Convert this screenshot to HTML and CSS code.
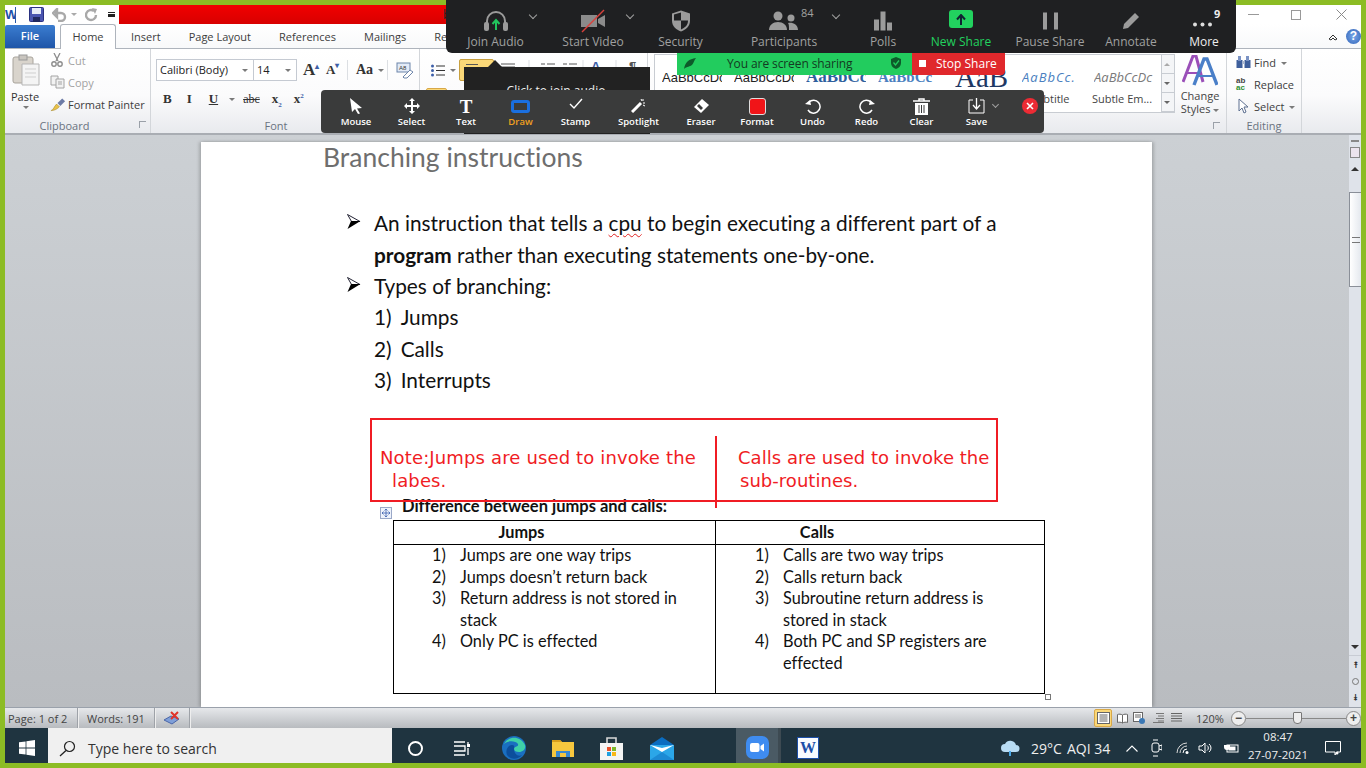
FILE: index.html
```html
<!DOCTYPE html>
<html>
	<head>
		<meta charset="UTF-8">
		<title>Branching instructions - Word</title>
		<link rel="stylesheet" href="styles.css">
	</head>
	<body>
		<div class="screen">
			<div class="titlebar">
				<div class="qat">
					<span class="word-mini">W</span>
					<svg class="qat-save" width="15" height="15" viewBox="0 0 15 15"><rect x="0.5" y="0.5" width="14" height="14" rx="1" fill="#4a55b0" stroke="#2a3180"/><rect x="3" y="1" width="9" height="6" fill="#e8ecf8"/><rect x="4" y="10" width="7" height="5" fill="#20285f"/></svg>
					<svg class="qat-undo" width="16" height="14" viewBox="0 0 16 14"><path d="M3 5h6a4 4 0 0 1 0 8H6M1 5l4-4v8z" fill="none" stroke="#a9a9a9" stroke-width="2.4"/></svg>
					<span class="qat-arrow"></span>
					<svg class="qat-redo" width="13" height="14" viewBox="0 0 13 14"><path d="M9 3A5 5 0 1 0 11 7" fill="none" stroke="#a9a9a9" stroke-width="2.4"/><path d="M7 0l5 1-2 5z" fill="#a9a9a9"/></svg>
					<span class="qat-custom"></span>
				</div>
				<div class="title-band"><span class="title-text">b</span></div>
				<div class="win-controls">
					<span class="win-min"></span>
					<span class="win-restore"></span>
					<svg width="11" height="11" viewBox="0 0 11 11"><path d="M0.5 0.5l10 10M10.5 0.5l-10 10" stroke="#8a8a8a"/></svg>
				</div>
			</div>

			<div class="tabs">
				<span class="tab-file">File</span>
				<span class="tab tab-active">Home</span>
				<span class="tab tab-insert">Insert</span>
				<span class="tab tab-layout">Page Layout</span>
				<span class="tab tab-refs">References</span>
				<span class="tab tab-mail">Mailings</span>
				<span class="tab tab-review">Review</span>
				<span class="tab-help-wrap">
					<svg width="10" height="8" viewBox="0 0 10 8"><path d="M1 6l4-4 4 4-2 1-2-2-2 2z" fill="none" stroke="#333"/></svg>
					<span class="tab-help">?</span>
				</span>
			</div>

			<div class="ribbon">
				<div class="group group-clip">
					<div class="group-body clip-body">
						<div class="paste">
							<svg width="28" height="32" viewBox="0 0 28 32"><rect x="1" y="3" width="20" height="26" rx="2" fill="#d9d4cc" stroke="#a8a39b"/><rect x="7" y="1" width="8" height="5" fill="#c9c5bf" stroke="#999"/><path d="M10 10h17v21H10z" fill="#f4f4f4" stroke="#b5b5b5"/><path d="M13 15h11M13 19h11M13 23h11" stroke="#cfcfcf"/></svg>
							<span>Paste</span>
							<i class="caret"></i>
						</div>
						<div class="clip-list">
							<div class="clip-item dim"><svg width="14" height="14" viewBox="0 0 14 14"><path d="M4 0l4 8M10 0L6 8" stroke="#8d8d8d" stroke-width="1.3"/><circle cx="4" cy="11" r="2.2" fill="none" stroke="#8d8d8d" stroke-width="1.4"/><circle cx="10" cy="11" r="2.2" fill="none" stroke="#8d8d8d" stroke-width="1.4"/></svg>Cut</div>
							<div class="clip-item dim"><svg width="15" height="14" viewBox="0 0 15 14"><path d="M1 1h7v9H1z" fill="#f2f2f2" stroke="#a4a4a4"/><path d="M6 4h8v9H6z" fill="#f2f2f2" stroke="#a4a4a4"/><path d="M8 7h4M8 9h4" stroke="#a4a4a4"/></svg>Copy</div>
							<div class="clip-item"><svg width="16" height="15" viewBox="0 0 17 15"><path d="M1 14c3-1 3-4 6-7l3 3c-3 3-6 4-9 4z" fill="#e9c24a" stroke="#a98b2a" stroke-width=".6"/><path d="M8 6l5-5 3 3-5 5z" fill="#6c7ba6"/></svg>Format Painter</div>
						</div>
					</div>
					<div class="group-label label-clip">Clipboard<i class="launcher"></i></div>
				</div>

				<div class="group group-font">
					<div class="group-body font-body">
						<div class="font-row">
							<div class="combo combo-font">Calibri (Body)<i class="caret"></i></div>
							<div class="combo combo-size">14<i class="caret"></i></div>
							<span class="glyph grow">A<sup>▴</sup></span>
							<span class="glyph shrink">A<sup>▾</sup></span>
							<span class="rule"></span>
							<span class="glyph case">Aa</span><i class="caret"></i>
							<span class="rule rule-b"></span>
							<svg class="clear-fmt" width="17" height="17" viewBox="0 0 17 17"><rect x="1" y="1" width="13" height="9" fill="#e3ebf7" stroke="#6d85aa"/><path d="M7 15l7-7 3 2-6 6H8z" fill="#fff" stroke="#6d85aa"/><text x="3" y="8" font-size="6" font-family="Liberation Sans" fill="#333">A8</text></svg>
						</div>
						<div class="font-row font-row2">
							<b class="fmt fmt-b">B</b>
							<i class="fmt fmt-i">I</i>
							<u class="fmt fmt-u">U</u><i class="caret"></i>
							<s class="fmt fmt-s">abc</s>
							<span class="fmt fmt-x">x<sub>2</sub></span>
							<span class="fmt fmt-x2">x<sup>2</sup></span>
						</div>
					</div>
					<div class="group-label label-font">Font</div>
				</div>

				<div class="group group-para">
					<div class="group-body para-body">
						<svg class="bullets" width="14" height="13" viewBox="0 0 14 13"><path d="M5 2h9M5 6.500h9M5 11h9" stroke="#333"/><circle cx="1.500" cy="2" r="1.500" fill="#3d5fa8"/><circle cx="1.500" cy="6.500" r="1.500" fill="#3d5fa8"/><circle cx="1.500" cy="11" r="1.500" fill="#3d5fa8"/></svg>
						<i class="caret"></i>
						<svg class="para-tools" width="145" height="20" viewBox="0 0 145 20"><path d="M0 5h14M0 8h14M40 5h4M46 5h8M62 5h4M68 5h8" stroke="#555"/><path d="M28 1v18M82 1v18M115 1v18" stroke="#dcdfe3"/><text x="90" y="12" font-size="13" font-weight="700" font-family="Liberation Sans" fill="#3d5fa8">A</text><text x="128" y="12" font-size="13" font-weight="700" font-family="Liberation Sans" fill="#555">¶</text></svg>
						<span class="para-on"><i></i></span>
						<span class="para-low"></span>
					</div>
				</div>

				<div class="group group-styles">
					<div class="gallery">
						<div class="style-samples">
							<span class="sample s-normal">AaBbCcDc</span>
							<span class="sample s-normal s-nospace">AaBbCcDc</span>
							<span class="sample s-h1">AaBbCc</span>
							<span class="sample s-h2">AaBbCc</span>
							<span class="sample s-title">AaB</span>
							<span class="sample s-sub">AaBbCc.</span>
							<span class="sample s-em">AaBbCcDc</span>
						</div>
						<div class="style-names">
							<span>Subtitle</span>
							<span>Subtle Em...</span>
						</div>
						<div class="gallery-scroll">
							<i class="gs-up"></i><i class="gs-down"></i><i class="gs-more"></i>
						</div>
					</div>
					<div class="change-styles">
						<svg width="36" height="32" viewBox="0 0 36 32"><path d="M1 27L11 1h3l7 26" fill="none" stroke="#9a4fb8" stroke-width="3"/><path d="M5 18h12" stroke="#9a4fb8" stroke-width="2"/><path d="M12 30L22 4h3l10 26" fill="none" stroke="#4a7fc8" stroke-width="3.400"/><path d="M16 21h15" stroke="#4a7fc8" stroke-width="2"/></svg>
						<span>Change<br>Styles <i class="caret"></i></span>
					</div>
					<i class="launcher launcher-styles"></i>
				</div>

				<div class="group group-edit">
					<div class="group-body edit-body">
						<div class="clip-item"><svg width="15" height="14" viewBox="0 0 15 14"><rect x="0.500" y="5" width="6" height="8" fill="#3f5f9c"/><rect x="8.500" y="5" width="6" height="8" fill="#3f5f9c"/><rect x="2" y="1" width="3" height="5" fill="#7b93c4"/><rect x="10" y="1" width="3" height="5" fill="#7b93c4"/><rect x="6" y="6" width="3" height="3" fill="#a8b6d0"/></svg><span>Find <i class="caret"></i></span></div>
						<div class="clip-item"><span class="replace-ico">ab<br><em>ac</em></span><span>Replace</span></div>
						<div class="clip-item"><svg width="15" height="16" viewBox="0 0 15 16"><path d="M3 1v12l3-3 2 5 2-1-2-5h4z" fill="#fff" stroke="#5d6f90"/></svg><span>Select <i class="caret"></i></span></div>
					</div>
					<div class="group-label">Editing</div>
				</div>
			</div>

			<div class="workspace">
				<div class="page">
					<h1 class="doc-title">Branching instructions</h1>
					<ul class="doc-bullets">
						<li><svg class="doc-arrow" width="14" height="15" viewBox="0 0 14 15"><path d="M.5.500L13 7.500H4.500z" fill="#fff" stroke="#223"/><path d="M4 7h9.500L.5 15z" fill="#000"/></svg>An instruction that tells a <span class="squiggle">cpu</span> to begin executing a different part of a <b>program</b> rather than executing statements one-by-one.</li>
						<li><svg class="doc-arrow" width="14" height="15" viewBox="0 0 14 15"><path d="M.5.500L13 7.500H4.500z" fill="#fff" stroke="#223"/><path d="M4 7h9.500L.5 15z" fill="#000"/></svg>Types of branching:</li>
					</ul>
					<ol class="doc-numbers">
						<li>1)<span>Jumps</span></li>
						<li>2)<span>Calls</span></li>
						<li>3)<span>Interrupts</span></li>
					</ol>
					<p class="doc-heading">Difference between jumps and calls:</p>
					<div class="table-wrap">
						<svg class="table-handle" width="12" height="12" viewBox="0 0 12 12"><rect x="0.500" y="0.500" width="11" height="11" fill="#eef2fb" stroke="#9aa8c8"/><path d="M6 2v8M2 6h8M6 2L4.500 3.500M6 2l1.500 1.500M6 10L4.500 8.500M6 10l1.500-1.500M2 6l1.500-1.500M2 6l1.500 1.500M10 6L8.500 4.500M10 6L8.500 7.500" stroke="#3a5fb0" stroke-width=".8"/></svg>
						<table class="diff-table">
							<tr>
								<th class="col-jumps">Jumps</th>
								<th class="col-calls">Calls</th>
							</tr>
							<tr>
								<td>
									<ol class="cell-list">
										<li><i>1)</i><span>Jumps are one way trips</span></li>
										<li><i>2)</i><span>Jumps doesn’t return back</span></li>
										<li><i>3)</i><span>Return address is not stored in stack</span></li>
										<li><i>4)</i><span>Only PC is effected</span></li>
									</ol>
								</td>
								<td>
									<ol class="cell-list">
										<li><i>1)</i><span>Calls are two way trips</span></li>
										<li><i>2)</i><span>Calls return back</span></li>
										<li><i>3)</i><span>Subroutine return address is stored in stack</span></li>
										<li><i>4)</i><span>Both PC and SP registers are effected</span></li>
									</ol>
								</td>
							</tr>
						</table>
						<span class="table-resize"></span>
					</div>
				</div>
				<div class="scrollbar">
					<i class="sb-split"></i>
					<i class="sb-ruler"></i>
					<i class="sb-up"></i>
					<div class="sb-thumb"><i></i></div>
					<div class="sb-fill"></div>
					<i class="sb-down"></i>
					<div class="sb-nav"><span>⯭</span><i></i><span>⯯</span></div>
				</div>
			</div>

			<div class="statusbar">
				<span class="st-cell st-page">Page: 1 of 2</span>
				<span class="st-cell st-words">Words: 191</span>
				<span class="st-cell st-proof">
					<svg width="17" height="14" viewBox="0 0 17 14"><path d="M1 9l7-4 8 3-7 5z" fill="#7f9fd8" stroke="#4a66a8"/><path d="M8 1l7 7M15 1L8 8" stroke="#e0342a" stroke-width="2"/></svg>
				</span>
				<div class="st-right">
					<span class="view-on"><svg width="13" height="12" viewBox="0 0 13 12"><rect x="0.500" y="0.500" width="12" height="11" fill="#fff" stroke="#666"/><path d="M2.500 3h8M2.500 5h8M2.500 7h8M2.500 9h8" stroke="#666"/></svg></span>
					<svg class="v1" width="11" height="11" viewBox="0 0 11 11"><path d="M5.500 2C4 1 2 1 .5 1.500v8c1.500-.5 3.500-.5 5 .5 1.500-1 3.500-1 5-.5v-8C9 1 7 1 5.500 2zm0 0v8" fill="#fff" stroke="#666"/></svg>
					<svg class="v2" width="12" height="12" viewBox="0 0 12 12"><rect x="0.500" y="0.500" width="9" height="9" fill="#fff" stroke="#666"/><path d="M2 3h6M2 5h6" stroke="#666"/><circle cx="9" cy="9" r="3" fill="#3b78b5"/></svg>
					<svg class="v3" width="11" height="10" viewBox="0 0 11 10"><path d="M3 .5h8M5 3h6M3 5.500h8M5 8h6M0 9.500h11" stroke="#777"/></svg>
					<svg class="v4" width="11" height="10" viewBox="0 0 11 10"><path d="M0 .5h11M0 3h11M0 5.500h11M0 8h11" stroke="#666"/></svg>
					<span class="zoom-pct">120%</span>
					<span class="zoom-btn">−</span>
					<span class="zoom-track"><i></i></span>
					<span class="zoom-btn">+</span>
				</div>
			</div>

			<div class="taskbar">
				<div class="start">
					<svg width="16" height="16" viewBox="0 0 16 16"><path d="M0 2.300l6.600-.9v6.200H0zM7.400 1.300L16 0v7.600H7.400zM0 8.400h6.600v6.200L0 13.700zM7.400 8.400H16V16l-8.600-1.200z" fill="#fff"/></svg>
				</div>
				<div class="search">
					<svg width="17" height="17" viewBox="0 0 17 17"><circle cx="10.500" cy="6.500" r="5" fill="none" stroke="#222" stroke-width="1.200"/><path d="M7 10.500L1 16" stroke="#222" stroke-width="1.300"/></svg>
					<span>Type here to search</span>
				</div>
				<div class="task-icons">
					<span class="ti ti-cortana"></span>
					<svg class="ti-view" width="17" height="15" viewBox="0 0 17 15"><path d="M0 1h11M0 5h11v5H0M0 14h11M14 1v4M14 7v7" fill="none" stroke="#fff" stroke-width="1.300"/><rect x="13" y="3" width="3" height="3" fill="#fff"/></svg>
					<svg class="ti-edge" width="24" height="24" viewBox="0 0 24 24"><circle cx="12" cy="12" r="12" fill="#1a6fc0"/><path d="M2 8C6 0 18-1 23 9c1 4-2 7-6 7-3 0-5-1-5-3 0-3 5-2 4-5-2-3-10-4-14 0z" fill="#3fd0a8"/><path d="M12 13c0 5 4 8 8 6-4 5-12 5-15 0-2-5 1-10 5-10 3 0 2 2 2 4z" fill="#0c4e9c"/></svg>
					<svg class="ti-folder" width="22" height="18" viewBox="0 0 22 18"><path d="M0 1h8l2 2h12v15H0z" fill="#f7c73e"/><path d="M0 1h8l2 2H0z" fill="#d99e1c"/><rect x="4" y="12" width="14" height="6" fill="#3a8ad0"/><rect x="8" y="14" width="6" height="4" fill="#f7c73e"/></svg>
					<svg class="ti-store" width="23" height="24" viewBox="0 0 23 24"><path d="M7 7V2h9v5" fill="none" stroke="#d8d8d8" stroke-width="1.600"/><rect y="7" width="23" height="17" fill="#f4f4f4"/><rect x="7" y="11" width="4" height="4" fill="#e8502a"/><rect x="12" y="11" width="4" height="4" fill="#7cb82a"/><rect x="7" y="16" width="4" height="4" fill="#1fa0e0"/><rect x="12" y="16" width="4" height="4" fill="#f8b818"/></svg>
					<svg class="ti-mail" width="24" height="23" viewBox="0 0 24 23"><path d="M12 0l12 8v15H0V8z" fill="#0a6cc0"/><path d="M0 8h24v15H0z" fill="#2ba6e8"/><path d="M0 8l12 7 12-7-12 3z" fill="#fff"/><path d="M0 23l12-8 12 8z" fill="#1c8ad4"/></svg>
					<div class="ti-zoom">
						<span class="zoom-logo"><svg width="14" height="9" viewBox="0 0 14 9"><rect width="9.500" height="9" rx="2" fill="#fff"/><path d="M10.500 3l3.500-2.500v8L10.500 6z" fill="#fff"/></svg></span>
					</div>
					<span class="ti-word">W</span>
				</div>
				<div class="tray">
					<svg class="t-cloud" width="21" height="16" viewBox="0 0 21 16"><path d="M5 12a4 4 0 0 1 0-8 6 6 0 0 1 11 1 3.500 3.500 0 0 1 0 7z" fill="#b8dcf4"/><path d="M10 11v5" stroke="#4aa8e8" stroke-width="2"/></svg>
					<span class="tray-temp">29°C</span>
					<span class="tray-aqi">AQI 34</span>
					<svg class="tray-up" width="12" height="7" viewBox="0 0 12 7"><path d="M.5 6.500L6 1l5.500 5.500" fill="none" stroke="#fff" stroke-width="1.100"/></svg>
					<svg class="t-meet" width="11" height="18" viewBox="0 0 11 18"><rect x="1" y="4" width="7" height="9" rx="2" fill="none" stroke="#fff"/><path d="M8 7l3-1v5l-3-1M2 1h5M2 17h5" fill="none" stroke="#fff"/></svg>
					<svg class="t-wifi" width="13" height="12" viewBox="0 0 13 12"><path d="M1 11A10 10 0 0 1 11 1M4 11A7 7 0 0 1 11 4" fill="none" stroke="#d8d8d8"/><path d="M7 11a4 4 0 0 1 4-4" fill="none" stroke="#fff"/><circle cx="11" cy="10.500" r="1.500" fill="#fff"/></svg>
					<svg class="t-sound" width="15" height="12" viewBox="0 0 15 12"><path d="M1 4h3l3-3v10L4 8H1z" fill="none" stroke="#fff"/><path d="M9 3.500a3 3 0 0 1 0 5M11 2a5 5 0 0 1 0 8" fill="none" stroke="#fff"/></svg>
					<svg class="t-batt" width="16" height="12" viewBox="0 0 16 12"><path d="M3 0v3M5 0v3M1 3h6v2a3 3 0 0 1-6 0z" fill="#fff"/><rect x="4" y="3" width="11" height="7" fill="none" stroke="#fff"/><rect x="5.500" y="4.500" width="7" height="4" fill="#fff"/></svg>
					<div class="clock"><span>08:47</span><span>27-07-2021</span></div>
					<svg class="notify" width="16" height="15" viewBox="0 0 16 15"><path d="M.5.500h15V11H12l-2 3V11H.5z" fill="none" stroke="#fff"/><circle cx="12" cy="12" r="1.500" fill="#fff"/></svg>
				</div>
			</div>

			<!-- zoom overlays -->
			<div class="audio-tip"><span>Click to join audio</span></div>

			<div class="meeting-bar">
				<div class="mb-item w-audio">
					<svg width="26" height="22" viewBox="0 0 26 22"><path d="M4 13V11a9 9 0 0 1 18 0v2" fill="none" stroke="#9b9b9b" stroke-width="2"/><rect x="1" y="12" width="5" height="9" rx="2" fill="#9b9b9b"/><rect x="20" y="12" width="5" height="9" rx="2" fill="#9b9b9b"/><path d="M13 20V11M9.500 14L13 10l3.500 4" fill="none" stroke="#21c55d" stroke-width="2"/></svg>
					<span>Join Audio</span><i class="chev"></i>
				</div>
				<div class="mb-item w-video">
					<svg width="26" height="24" viewBox="0 0 26 24"><path d="M1 6h16v12H1z" fill="#8b8b8b"/><path d="M18 10l7-4v12l-7-4z" fill="#8b8b8b"/><path d="M2 23L24 1" stroke="#d8413c" stroke-width="1.500"/></svg>
					<span>Start Video</span><i class="chev"></i>
				</div>
				<div class="mb-item w-sec">
					<svg width="20" height="23" viewBox="0 0 20 23"><path d="M10 1l9 3v7c0 6-4 9-9 11-5-2-9-5-9-11V4z" fill="#9b9b9b"/><path d="M10 3v8H3V5zM10 11h7c0 5-3 7-7 9z" fill="#1f2022"/></svg>
					<span>Security</span>
				</div>
				<div class="mb-item w-part">
					<svg width="30" height="20" viewBox="0 0 30 20"><circle cx="9" cy="5" r="4.500" fill="#9b9b9b"/><path d="M0 19c0-5 4-8 9-8s9 3 9 8z" fill="#9b9b9b"/><circle cx="22" cy="7" r="3.500" fill="#9b9b9b"/><path d="M20 19c0-3 0-6-1-7 4-1 10 1 10 7z" fill="#9b9b9b"/></svg>
					<em class="part-count">84</em>
					<span>Participants</span><i class="chev"></i>
				</div>
				<div class="mb-item w-polls">
					<svg width="18" height="19" viewBox="0 0 18 19"><rect y="8" width="5" height="11" fill="#9b9b9b"/><rect x="6.500" width="5" height="19" fill="#9b9b9b"/><rect x="13" y="11" width="5" height="8" fill="#9b9b9b"/></svg>
					<span>Polls</span>
				</div>
				<div class="mb-item w-new">
					<span class="new-ico"><svg width="10" height="11" viewBox="0 0 10 11"><path d="M5 11V2M1 5.500L5 1l4 4.500" fill="none" stroke="#123" stroke-width="2"/></svg></span>
					<span class="new-label">New Share</span>
				</div>
				<div class="mb-item w-pause">
					<svg width="15" height="17" viewBox="0 0 15 17"><rect width="4" height="17" fill="#9b9b9b"/><rect x="11" width="4" height="17" fill="#9b9b9b"/></svg>
					<span>Pause Share</span>
				</div>
				<div class="mb-item w-ann">
					<svg width="18" height="18" viewBox="0 0 18 18"><path d="M1 17l1-5L13 1l4 4L6 16z" fill="#9b9b9b"/></svg>
					<span>Annotate</span>
				</div>
				<div class="mb-item w-more">
					<svg width="22" height="17" viewBox="0 0 22 17"><circle cx="2" cy="12" r="2" fill="#ddd"/><circle cx="9.500" cy="12" r="2" fill="#ddd"/><circle cx="17" cy="12" r="2" fill="#ddd"/></svg>
					<em class="more-count">9</em>
					<span>More</span>
				</div>
			</div>

			<div class="share-status">
				<div class="share-green">
					<svg class="leaf" width="12" height="11" viewBox="0 0 12 11"><path d="M0 11C1 4 5 1 12 0 10 2 10 5 8 7 6 9 3 8 0 11z" fill="#0d5a2a"/></svg>
					<span>You are screen sharing</span>
					<svg class="shield" width="10" height="12" viewBox="0 0 10 12"><path d="M5 0l5 2v4c0 3-2 5-5 6-3-1-5-3-5-6V2z" fill="#0d5a2a"/><path d="M2.500 5.500L4.500 8 8 3.500" fill="none" stroke="#22cc5e" stroke-width="1.300"/></svg>
				</div>
				<div class="share-stop"><i></i>Stop Share</div>
			</div>

			<div class="annot-bar">
				<div class="ab-item w56"><svg width="14" height="16" viewBox="0 0 14 16"><path d="M1 0l12 10-5 .5 3 5-2 .5-3-5-3 3z" fill="#fff"/></svg><span>Mouse</span></div>
				<div class="ab-item w55"><svg width="16" height="16" viewBox="0 0 16 16"><path d="M8 0l3 3H9v4h4V5l3 3-3 3V9H9v4h2l-3 3-3-3h2V9H3v2L0 8l3-3v2h4V3H5z" fill="#fff"/></svg><span>Select</span></div>
				<div class="ab-item w54"><b class="t-ico">T</b><span>Text</span></div>
				<div class="ab-item w55"><span class="draw-ico"></span><span class="draw-label">Draw</span></div>
				<div class="ab-item w55"><svg width="14" height="12" viewBox="0 0 14 12"><path d="M1 6l4 4 8-9" fill="none" stroke="#fff" stroke-width="1.400"/></svg><span>Stamp</span></div>
				<div class="ab-item w71"><svg width="15" height="15" viewBox="0 0 15 15"><path d="M1 14L10 5" stroke="#fff" stroke-width="3"/><path d="M12 1v2M14 5h-2M10 1l1 2M14 8l-2-1" stroke="#fff"/></svg><span>Spotlight</span></div>
				<div class="ab-item w54"><svg width="17" height="16" viewBox="0 0 17 16"><path d="M1 9l8-8 7 6-8 8z" fill="#fff"/><path d="M4 8l4 4 2-2-4-4z" fill="#3a3b3b"/></svg><span>Eraser</span></div>
				<div class="ab-item w58"><span class="format-ico"></span><span>Format</span></div>
				<div class="ab-item w53"><svg width="16" height="16" viewBox="0 0 16 16"><path d="M4 4a6.500 6.500 0 1 1-1 8" fill="none" stroke="#fff" stroke-width="1.500"/><path d="M0 6l5-4 1 5z" fill="#fff"/></svg><span>Undo</span></div>
				<div class="ab-item w55"><svg width="16" height="16" viewBox="0 0 16 16"><path d="M12 4a6.500 6.500 0 1 0 1 8" fill="none" stroke="#fff" stroke-width="1.500"/><path d="M16 6l-5-4-1 5z" fill="#fff"/></svg><span>Redo</span></div>
				<div class="ab-item w55"><svg width="17" height="17" viewBox="0 0 17 17"><path d="M0 3h17M6 3V1h5v2" fill="none" stroke="#fff" stroke-width="1.500"/><path d="M2 5h13v12H2z" fill="#fff"/><path d="M6 7v8M8.500 7v8M11 7v8" stroke="#3a3b3b"/></svg><span>Clear</span></div>
				<div class="ab-item w55"><svg width="17" height="16" viewBox="0 0 17 16"><path d="M5 2H1v13h15V2h-4" fill="none" stroke="#fff"/><path d="M8.500 0v10M5 7l3.500 4L12 7" fill="none" stroke="#fff" stroke-width="1.300"/></svg><span>Save</span><i class="chev chev-save"></i></div>
				<div class="ab-close"><svg width="8" height="8" viewBox="0 0 8 8"><path d="M1 1l6 6M7 1L1 7" stroke="#fff" stroke-width="1.600"/></svg></div>
			</div>

			<!-- red annotation drawn over the page -->
			<div class="note-box"></div>
			<div class="note-line"></div>
			<div class="note-text note-left">Note:Jumps are used to invoke the<br><span>labes.</span></div>
			<div class="note-text note-right">Calls are used to invoke the<br><span>sub-routines.</span></div>
		</div>
	</body>
</html>
```

FILE: styles.css
```css
*{margin:0;padding:0;box-sizing:border-box;}
html,body{width:1366px;height:768px;overflow:hidden;}
body{font-family:"Open Sans","Noto Sans",sans-serif;font-size:11px;color:#444;}
i,em{font-style:normal;}
ul,ol{list-style:none;}
svg{flex:none;display:block;}

.screen{position:relative;width:1366px;height:768px;padding:5px;background:#8cbc24;display:flex;flex-direction:column;overflow:hidden;}

/* title bar */
.titlebar{height:19px;display:flex;background:#fff;flex:none;}
.qat{width:114px;display:flex;align-items:center;flex:none;background:#fff;}
.word-mini{width:11px;height:16px;background:#fff;color:#1c4fa8;font:bold 13px "Liberation Sans",sans-serif;overflow:hidden;text-align:right;border-right:1px solid #2858a8;}
.qat-save{margin-left:13px;}
.qat-undo{margin-left:8px;}
.qat-arrow{width:0;height:0;margin-left:3px;border:3px solid transparent;border-top:3px solid #aaa;border-bottom:0;}
.qat-redo{margin-left:8px;}
.qat-custom{width:7px;height:5px;margin-left:10px;border-top:1px solid #222;border-bottom:3px solid #222;box-shadow:-5px 0 0 -4px #aaa;}
.title-band{width:1117px;background:linear-gradient(#f20000,#d80000);font:12px "Open Sans",sans-serif;color:#222;padding:1px 0 0 324px;}
.title-text{display:block;}
.win-controls{flex:1;display:flex;align-items:center;justify-content:flex-end;gap:32px;padding:0 14px;background:#fff;}
.win-min{width:11px;height:1px;background:#999;}
.win-restore{width:10px;height:10px;border:1px solid #999;margin-right:3px;}

/* tabs */
.tabs{height:25px;background:linear-gradient(#fff,#f8f9fa);display:flex;align-items:flex-end;flex:none;border-bottom:1px solid #aeb4bc;position:relative;font-size:11px;color:#3d3d3d;}
.tab-file{width:50px;height:23px;background:linear-gradient(#3b7dd0,#1e55a8);color:#fff;font-weight:600;text-align:center;line-height:22px;border-radius:2px 2px 0 0;}
.tab{height:23px;line-height:24px;flex:none;}
.tab-active{width:56px;margin-left:5px;text-align:center;background:#fff;border:1px solid #aeb4bc;border-bottom:0;border-radius:3px 3px 0 0;height:25px;margin-bottom:-1px;position:relative;line-height:24px;}
.tab-insert{margin-left:15px;}
.tab-layout{margin-left:28px;}
.tab-refs{margin-left:28px;}
.tab-mail{margin-left:28px;}
.tab-review{margin-left:28px;}
.tab-help-wrap{margin-left:auto;display:flex;align-items:center;gap:8px;height:23px;}
.tab-help{width:15px;height:15px;border-radius:50%;background:radial-gradient(#7aa8e8,#2f62b8);color:#fff;font:bold 12px/15px "Liberation Sans",sans-serif;text-align:center;}

/* ribbon */
.ribbon{height:86px;flex:none;background:linear-gradient(#fff,#fbfbfc 55%,#e8eaee);display:flex;border-bottom:2px solid #a9adb3;position:relative;}
.group{position:relative;border-right:1px solid #d3d6da;display:flex;flex-direction:column;flex:none;}
.group-body{height:67px;flex:none;}
.group-label{height:17px;line-height:20px;text-align:center;color:#6a7380;font-size:11px;position:relative;}
.label-clip{padding-right:26px;}
.label-font{padding-right:18px;}
.launcher{position:absolute;right:4px;top:5px;width:7px;height:7px;border:1px solid #9aa0a8;border-width:1px 0 0 1px;}
.group-clip{width:146px;}
.clip-body{display:flex;}
.paste{width:45px;padding:5px 0 0 7px;color:#333;}
.paste span{display:block;margin:3px 0 0 -1px;}
.paste .caret{margin:2px 0 0 11px;display:block;}
.caret{display:inline-block;width:0;height:0;border:3px solid transparent;border-top:3px solid #7a7a7a;border-bottom:0;vertical-align:middle;}
.clip-list{padding-top:0;}
.clip-item{height:22px;display:grid;grid-template-columns:16px auto;gap:2px;align-items:center;color:#3d3d3d;white-space:nowrap;}
.clip-item .caret{margin-left:2px;}
.clip-item.dim{color:#a2a2a2;}
.group-font{width:269px;}
.font-body{padding:10px 0 0 5px;}
.font-row{display:flex;align-items:center;height:22px;}
.combo{height:22px;border:1px solid #c5cad2;background:#fff;line-height:20px;color:#222;padding-left:3px;display:flex;justify-content:space-between;align-items:center;padding-right:5px;flex:none;}
.combo-font{width:98px;font-size:11px;}
.combo-size{width:43px;border-left:0;}
.glyph{font:bold 15px "Liberation Serif",serif;color:#333;position:relative;flex:none;}
.glyph sup{font-size:8px;color:#3d5fa8;vertical-align:6px;line-height:0;}
.grow{margin-left:6px;font-size:17px;width:23px;}
.shrink{font-size:13px;width:15px;}
.case{font-size:14px;width:22px;}
.rule{width:1px;height:20px;background:#dcdfe3;margin:0 8px 0 6px;flex:none;}
.rule-b{margin-left:3px;}
.font-row2{margin-top:6px;height:24px;font:bold 12px "Liberation Serif",serif;color:#333;}
.fmt-b{margin-left:7px;font-size:13px;}
.fmt-i{margin-left:15px;font-size:13px;}
.fmt-u{margin-left:17px;font-size:13px;}
.font-row2 .caret{margin-left:11px;}
.fmt-s{margin-left:8px;font-size:12px;font-weight:normal;}
.fmt-x{margin-left:12px;font-size:13px;}
.fmt-x sub,.fmt-x2 sup{font-size:7px;line-height:0;color:#3d5fa8;}
.fmt-x2{margin-left:12px;font-size:13px;}
.group-para{width:228px;position:relative;}
.para-body{position:relative;display:flex;align-items:flex-start;padding:15px 0 0 11px;}
.para-body .caret{margin:5px 0 0 5px;}
.para-tools{margin:-5px 0 0 45px;}
.para-on{position:absolute;left:39px;top:10px;width:35px;height:22px;background:#fbd878;border:1px solid #c8a040;border-radius:2px;}
.para-on i{display:block;width:12px;height:4px;margin:4px 0 0 6px;border-top:1px solid #555;border-bottom:1px solid #555;}
.para-low{position:absolute;left:6px;top:39px;width:21px;height:20px;background:#fbd878;border:1px solid #d8a848;border-radius:2px;}
.group-styles{width:579px;padding:5px 0 0 6px;display:flex;flex-direction:row;}
.gallery{width:521px;height:59px;background:#fff;border:1px solid #c8ccd2;position:relative;overflow:hidden;flex:none;}
.style-samples{display:flex;height:44px;align-items:center;padding-left:7px;white-space:nowrap;color:#222;}
.sample{flex:none;overflow:hidden;width:60px;margin-right:12px;}
.s-normal{font:13px "Liberation Sans",sans-serif;}
.s-h1{font:bold 17px "Liberation Serif",serif;color:#2e5f9e;}
.s-h2{font:bold 15px "Liberation Serif",serif;color:#4a7fc0;}
.s-title{font:29px "Liberation Serif",serif;color:#1f3864;padding-left:5px;}
.s-sub{font:italic 13px "Open Sans",sans-serif;color:#4a7fc0;letter-spacing:1px;}
.s-em{font:italic 13px "Open Sans",sans-serif;color:#7a7a7a;}
.style-names{position:absolute;left:359px;top:36px;display:flex;white-space:nowrap;color:#444;line-height:16px;}
.style-names span{width:72px;text-align:center;}
.gallery-scroll{position:absolute;right:0;top:0;width:13px;height:57px;background:#f4f5f7;border-left:1px solid #c8ccd2;display:flex;flex-direction:column;}
.gallery-scroll i{flex:1;border-bottom:1px solid #c8ccd2;position:relative;}
.gallery-scroll i:after{content:"";position:absolute;left:2px;top:8px;border:3.500px solid transparent;border-top:3.500px solid #666;border-bottom:0;}
.gallery-scroll .gs-up:after{border-top:0;border-bottom:3.500px solid #aaa;}
.change-styles{width:48px;text-align:center;padding:1px 0 0 2px;color:#444;line-height:13px;flex:none;}
.change-styles svg{margin:0 auto 2px;}
.launcher-styles{top:73px;right:6px;}
.group-edit{width:75px;}
.edit-body{padding:2px 0 0 9px;}
.edit-body .clip-item{grid-template-columns:15px auto;gap:3px;}
.replace-ico{font:bold 8px/7px "Liberation Sans",sans-serif;color:#444;width:15px;}
.replace-ico em{color:#2f8f2f;}

/* document */
.workspace{flex:1;min-height:0;display:flex;background:linear-gradient(#ccd0d4,#b9bcc0);padding:7px 0 0 196px;position:relative;overflow:hidden;}
.page{width:951px;background:#fff;box-shadow:-2px 0 3px rgba(0,0,0,.18),2px 0 3px rgba(0,0,0,.18);flex:none;font-family:Lato,"Liberation Sans",sans-serif;font-variant-ligatures:none;color:#111;position:relative;}
.doc-title{font-size:26.500px;font-weight:400;color:#6e6e6e;margin:0 0 0 122px;line-height:30px;}
.doc-bullets{margin:35px 0 0 173px;width:640px;font-size:20.800px;line-height:31.500px;}
.doc-bullets li{position:relative;}
.doc-arrow{position:absolute;left:-27px;top:7px;}
.squiggle{text-decoration:underline wavy #e02020 1px;text-underline-offset:2px;}
.doc-numbers{margin:-.5px 0 0 173px;font-size:20.800px;line-height:31.500px;}
.doc-numbers li span{margin-left:9px;}
.doc-heading{position:absolute;left:201px;top:355px;font-size:16.500px;font-weight:700;line-height:18px;color:#111;white-space:nowrap;}
.table-wrap{position:absolute;left:192px;top:378px;width:652px;}
.table-handle{position:absolute;left:-13px;top:-13px;}
.diff-table{width:652px;height:174px;border-collapse:collapse;font-size:16.300px;table-layout:fixed;}
.diff-table th,.diff-table td{border:1px solid #000;vertical-align:top;}
.diff-table th{height:24px;font-weight:700;line-height:21px;}
.col-jumps{width:322px;padding-right:66px;}
.col-calls{padding-right:126px;}
.diff-table td{padding:0 0 0 38px;}
.diff-table td:last-child{padding-left:39px;}
.cell-list{margin-top:-1px;}
.cell-list li{display:flex;line-height:21.500px;}
.cell-list i{width:28px;flex:none;}
.cell-list span{width:225px;}
.table-resize{position:absolute;right:-6px;bottom:-6px;width:6px;height:6px;border:1px solid #777;background:#fff;}

/* scrollbar */
.scrollbar{position:absolute;right:0;top:0;width:12px;bottom:0;background:#dfe3ea;display:flex;flex-direction:column;align-items:center;}
.sb-split{width:8px;height:2px;background:#888;margin-top:5px;}
.sb-ruler{width:10px;height:11px;margin:5px 0 9px;background:#ece4ee;border:1px solid #888;flex:none;}
.sb-up,.sb-down{width:0;height:0;border:4px solid transparent;flex:none;}
.sb-up{border-bottom:4px solid #333;border-top:0;}
.sb-down{border-top:4px solid #333;border-bottom:0;margin-bottom:6px;}
.sb-thumb{width:12px;height:95px;background:linear-gradient(90deg,#fff,#e4e8ee);border:1px solid #8a8f98;border-right:0;margin-top:21px;display:flex;align-items:center;justify-content:center;flex:none;}
.sb-thumb i{width:8px;height:6px;border-top:1px solid #777;border-bottom:1px solid #777;}
.sb-fill{flex:1;}
.sb-nav{height:52px;width:12px;border-top:1px solid #c8ccd4;display:flex;flex-direction:column;align-items:center;justify-content:space-around;font:9px/10px "DejaVu Sans",sans-serif;color:#333;flex:none;}
.sb-nav i{width:7px;height:7px;border:1px solid #777;border-radius:50%;}

/* status bar */
.statusbar{height:21px;flex:none;display:flex;align-items:center;background:linear-gradient(#e6e8eb,#b8bbbf);border-top:1px solid #9aa1ab;color:#444;font-size:11px;}
.st-cell{height:100%;display:flex;align-items:center;padding-left:3px;border-right:1px solid #9ea2a8;box-shadow:1px 0 0 #eee;flex:none;}
.st-page{width:73px;}
.st-words{width:77px;padding-left:9px;}
.st-proof{width:35px;padding-left:8px;}
.st-right{margin-left:auto;display:flex;align-items:center;}
.view-on{width:18px;height:18px;margin-left:-1px;background:#fbd878;border:1px solid #d8a848;border-radius:2px;display:flex;align-items:center;justify-content:center;}
.v1{margin-left:5px;}
.v2{margin-left:5px;}
.v3{margin-left:8px;}
.v4{margin-left:7px;}
.zoom-pct{margin-left:14px;width:35px;color:#444;}
.zoom-btn{width:15px;height:15px;border:1px solid #888;border-radius:50%;background:#eee;font:bold 12px/12px "Liberation Sans",sans-serif;text-align:center;color:#444;flex:none;}
.zoom-track{width:100px;height:1px;background:#888;position:relative;}
.zoom-track i{position:absolute;left:47px;top:-6px;width:9px;height:12px;background:#eee;border:1px solid #777;border-radius:1px 1px 4px 4px;}

/* taskbar */
.taskbar{height:35px;flex:none;background:#1f3440;display:flex;align-items:stretch;color:#fff;}
.start{width:43px;display:flex;justify-content:center;align-items:center;padding-top:5px;}
.search{width:344px;background:#f0f0f0;display:flex;align-items:center;gap:12px;padding:5px 0 0 11px;color:#333;font-size:14px;font-family:"Open Sans",sans-serif;}
.task-icons{display:flex;align-items:center;padding:5px 0 0 16px;}
.ti-cortana{width:15px;height:15px;border:2px solid #fff;border-radius:50%;}
.ti-view{margin-left:31px;}
.ti-edge{margin-left:31px;}
.ti-folder{margin-left:26px;}
.ti-store{margin-left:26px;}
.ti-mail{margin-left:27px;}
.ti-zoom{width:45px;height:35px;margin:-5px 0 0 62px;padding-top:4px;background:#4a5a64;border-right:3px solid #3d4a52;display:flex;align-items:center;justify-content:center;}
.zoom-logo{width:23px;height:23px;border-radius:7px;background:#3f8cf0;display:flex;align-items:center;justify-content:center;}
.ti-word{width:22px;height:22px;margin-left:16px;background:#f8fbff;border:1px solid #1c4fa8;color:#1c4fa8;font:bold 16px/20px "Liberation Serif",serif;text-align:center;}
.tray{margin-left:auto;display:flex;align-items:center;padding:5px 20px 0 0;font-size:14px;color:#eee;}
.tray-temp{margin-left:10px;width:36px;}
.tray-aqi{width:59px;}
.t-meet{margin-left:13px;}
.t-wifi{margin-left:14px;}
.t-sound{margin-left:9px;}
.t-batt{margin-left:10px;}
.clock{width:58px;display:flex;flex-direction:column;align-items:center;font-size:11.500px;line-height:18px;margin:-5px 18px 0 10px;color:#eee;white-space:nowrap;}

/* zoom toolbars */
.meeting-bar{position:absolute;left:446px;top:0;width:790px;height:53px;background:#1f2022;border-radius:0 0 6px 6px;display:flex;color:#a0a0a0;font-size:12px;}
.mb-item{position:relative;display:flex;flex-direction:column;align-items:center;height:53px;padding-top:9px;flex:none;}
.mb-item>svg{height:24px;}
.mb-item>span:not(.new-ico){position:absolute;top:34px;left:0;right:0;text-align:center;white-space:nowrap;line-height:16px;}
.w-audio{width:99px;}
.w-video{width:96px;}
.w-sec{width:79px;}
.w-part{width:128px;}
.w-polls{width:70px;}
.w-new{width:86px;}
.w-pause{width:92px;}
.w-ann{width:70px;}
.w-more{width:70px;padding-left:6px;}
.mb-item.w-more>span{left:6px;color:#eee;}
.chev{position:absolute;right:9px;top:12px;width:6px;height:6px;border:solid #a0a0a0;border-width:0 1px 1px 0;transform:rotate(45deg);}
.w-video .chev{right:8px;}
.part-count{position:absolute;left:81px;top:5px;font-size:11px;color:#a0a0a0;}
.more-count{position:absolute;left:48px;top:6px;font:bold 11px "Open Sans",sans-serif;color:#eee;}
.new-ico{width:24px;height:18px;background:#22d25f;border-radius:3px;display:flex;align-items:center;justify-content:center;margin-top:1px;}
.mb-item>.new-label{color:#22d25f;}

.share-status{position:absolute;left:677px;top:53px;height:22px;display:flex;font-size:12px;}
.share-green{width:235px;background:#22cc5e;color:#143a22;display:flex;align-items:center;padding:0 0 2px 7px;}
.share-green span{margin-left:31px;white-space:nowrap;letter-spacing:-.1px;}
.shield{margin-left:38px;}
.share-stop{width:93px;background:#e0282c;color:#fff;border-radius:0 0 4px 0;display:flex;align-items:center;gap:10px;padding:0 0 2px 7px;}
.share-stop i{width:7px;height:7px;background:#fff;}

.audio-tip{position:absolute;left:464px;top:67px;width:186px;height:67px;background:#222;color:#eee;font-size:12px;text-align:center;padding-top:15px;padding-right:2px;}
.audio-tip:before{content:"";position:absolute;left:24px;top:-7px;border:7px solid transparent;border-top:0;border-bottom:7px solid #222;}

.annot-bar{position:absolute;left:321px;top:90px;width:723px;height:43px;background:#3a3b3b;border-radius:4px;display:flex;color:#fff;font-size:9.500px;font-weight:600;padding-left:7px;}
.ab-item{position:relative;height:43px;flex:none;display:flex;flex-direction:column;align-items:center;padding-top:8px;}
.ab-item>span:not(.draw-ico):not(.format-ico){position:absolute;top:25px;left:-6px;right:-6px;text-align:center;line-height:14px;}
.w53{width:53px;}
.w54{width:54px;}
.w55{width:55px;}
.w56{width:56px;}
.w58{width:58px;}
.w71{width:71px;}
.t-ico{font:bold 19px/18px "Liberation Serif",serif;}
.draw-ico{width:19px;height:13px;border:3px solid #1a6fe0;border-radius:3px;margin-top:2px;}
.ab-item>.draw-label{color:#f0a020;}
.format-ico{width:17px;height:17px;background:#f01418;border:1px solid #ddd;border-radius:3px;}
.chev-save{right:6px;top:12px;width:5px;height:5px;}
.ab-close{width:16px;height:16px;border-radius:50%;background:#ec2b34;display:flex;align-items:center;justify-content:center;margin:8px 0 0 18px;flex:none;}

/* annotation */
.note-box{position:absolute;left:370px;top:418px;width:628px;height:84px;border:2px solid #f01c24;}
.note-line{position:absolute;left:715px;top:436px;width:2px;height:72px;background:#f01c24;}
.note-text{position:absolute;top:446px;font:18px/23px "DejaVu Sans",sans-serif;color:#f01c24;white-space:nowrap;}
.note-left{left:380px;letter-spacing:.14px;}
.note-left span{margin-left:12px;}
.note-right{left:738px;letter-spacing:.03px;}
.note-right span{margin-left:2px;}
```
